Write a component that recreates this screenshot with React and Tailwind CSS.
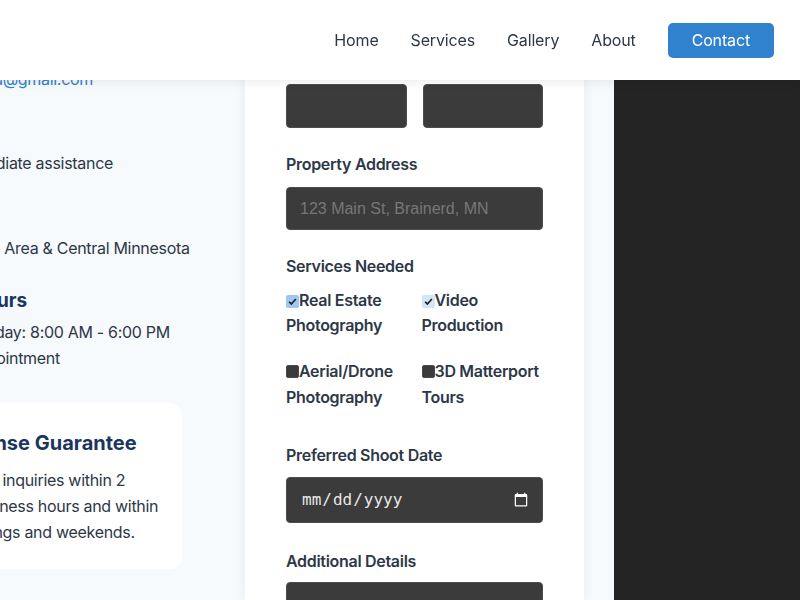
import { Mail, Phone, MapPin, Clock } from "lucide-react";

function CheckBox({ checked, light }) {
  if (!checked) {
    return (
      <span className="inline-block w-[13px] h-[13px] rounded-[2px] bg-[#3b3b3b] border border-[#4a4a4a] align-[-1px] shrink-0"></span>
    );
  }
  return (
    <span
      className={`inline-flex items-center justify-center w-[13px] h-[13px] rounded-[2px] align-[-1px] shrink-0 ${
        light ? "bg-[#d3e5f9]" : "bg-[#9fc7f4]"
      }`}
    >
      <svg viewBox="0 0 13 13" className="w-[11px] h-[11px]">
        <path d="M2.5 6.8l2.6 2.6L10.5 3.6" fill="none" stroke="#222" strokeWidth="2" />
      </svg>
    </span>
  );
}

function ContactItem({ icon, title, children }) {
  return (
    <div className="flex gap-3">
      <div className="w-10 h-10 rounded-full bg-[#3182ce] flex items-center justify-center shrink-0 text-white">
        {icon}
      </div>
      <div className="leading-[1.6]">
        <h4 className="font-semibold text-[#1a365d]">{title}</h4>
        {children}
      </div>
    </div>
  );
}

export default function App() {
  const services = [
    { label: "Real Estate Photography", checked: true },
    { label: "Video Production", checked: true, light: true },
    { label: "Aerial/Drone Photography", checked: false },
    { label: "3D Matterport Tours", checked: false },
  ];

  return (
    <div className="relative h-[600px] w-[800px] overflow-hidden bg-[#f7fafc] font-['Inter',sans-serif] tracking-[-0.3px] text-[#2d3748]">
      {/* Header */}
      <header className="fixed top-0 left-0 right-0 z-10 h-20 bg-white shadow-[0_2px_10px_rgba(0,0,0,0.08)] flex items-center justify-end pr-[26px]">
        <nav className="flex items-center gap-8 text-base tracking-[-0.15px]">
          <a className="text-[#2d3748]">Home</a>
          <a className="text-[#2d3748]">Services</a>
          <a className="text-[#2d3748]">Gallery</a>
          <a className="text-[#2d3748]">About</a>
          <a className="h-[35px] px-6 flex items-center rounded-[5px] bg-[#3182ce] text-white">Contact</a>
        </nav>
      </header>

      <main className="flex h-full">
        {/* Contact info column */}
        <div className="w-[334px] -ml-[152px] shrink-0 pt-[41px] whitespace-nowrap">
          <div className="flex flex-col gap-2">
            <ContactItem icon={<Mail className="w-5 h-5" />} title="Email">
              <a className="block text-[#3182ce]">photobrainerd@gmail.com</a>
            </ContactItem>
            <ContactItem icon={<Phone className="w-5 h-5" />} title="Phone">
              <p>218.555.0142</p>
              <p>Call for immediate assistance</p>
            </ContactItem>
            <ContactItem icon={<MapPin className="w-5 h-5" />} title="Area">
              <p>Brainerd, MN</p>
              <p>Brainerd Lake Area &amp; Central Minnesota</p>
            </ContactItem>
          </div>

          <div className="flex gap-3 mt-[24px] -ml-[18px]">
            <div className="w-10 h-10 rounded-full bg-[#3182ce] flex items-center justify-center shrink-0 text-white">
              <Clock className="w-5 h-5" />
            </div>
            <div>
              <h3 className="text-[19px] font-bold leading-[1.6] tracking-normal text-[#1a365d] mb-[4px]">Business Hours</h3>
              <p className="leading-[1.6]">Monday - Saturday: 8:00 AM - 6:00 PM</p>
              <p className="leading-[1.6]">Sunday: By appointment</p>
            </div>
          </div>

          <div className="mt-8 bg-white rounded-xl p-6">
            <h3 className="text-xl font-bold leading-[1.6] tracking-normal text-[#1a365d] mb-[9px]">Quick Response Guarantee</h3>
            <p className="leading-[1.6]">
              We respond to all inquiries within 2
              <br />
              hours during business hours and within
              <br />
              4 hours on evenings and weekends.
            </p>
          </div>
        </div>

        {/* Form card */}
        <div className="ml-[63px] w-[339px] shrink-0 bg-white px-[41px] pt-[50px] shadow-[0_0_12px_rgba(0,0,0,0.06)]">
          <div className="grid grid-cols-2 gap-4 mb-6">
            <div>
              <label className="block font-semibold leading-[1.6] mb-2">Full Name</label>
              <input className="w-full h-[44px] rounded-[4px] bg-[#3b3b3b] border border-[#4d4d4d] outline-none" />
            </div>
            <div>
              <label className="block font-semibold leading-[1.6] mb-2">Phone</label>
              <input className="w-full h-[44px] rounded-[4px] bg-[#3b3b3b] border border-[#4d4d4d] outline-none" />
            </div>
          </div>

          <div className="mb-6">
            <label className="block font-semibold leading-[1.6] mb-[10px]">Property Address</label>
            <input
              placeholder="123 Main St, Brainerd, MN"
              className="w-full h-[43px] px-[13px] rounded-[4px] bg-[#3b3b3b] border border-[#4d4d4d] outline-none font-['Liberation_Sans',Arial,sans-serif] tracking-normal text-base text-white placeholder:text-[#777]"
            />
          </div>

          <div className="mb-[33px]">
            <label className="block font-semibold leading-[1.6] mb-2">Services Needed</label>
            <div className="grid grid-cols-2 gap-x-[14px] gap-y-5">
              {services.map((s) => (
                <label key={s.label} className="font-semibold leading-[1.6]">
                  <CheckBox checked={s.checked} light={s.light} />
                  {s.label}
                </label>
              ))}
            </div>
          </div>

          <div className="mb-[26px]">
            <label className="block font-semibold leading-[1.6] mb-2">Preferred Shoot Date</label>
            <input
              type="date"
              className="w-full h-[46px] pl-[14px] pr-[11px] rounded-[4px] bg-[#3b3b3b] border border-[#4d4d4d] outline-none font-['DejaVu_Sans_Mono',monospace] tracking-normal text-base text-[#e8e8e8] [color-scheme:dark]"
            />
          </div>

          <div>
            <label className="block font-semibold leading-[1.6] mb-2">Additional Details</label>
            <textarea
              rows={5}
              placeholder="Tell us about your property and project needs..."
              className="w-full p-[13px] rounded-[4px] bg-[#3b3b3b] border border-[#4d4d4d] outline-none font-['DejaVu_Sans_Mono',monospace] tracking-normal text-base text-white placeholder:text-[#777] resize-none"
            ></textarea>
          </div>
        </div>

        <div className="w-[30px] shrink-0"></div>
        <div className="flex-1 bg-[#242424]"></div>
      </main>
    </div>
  );
}
